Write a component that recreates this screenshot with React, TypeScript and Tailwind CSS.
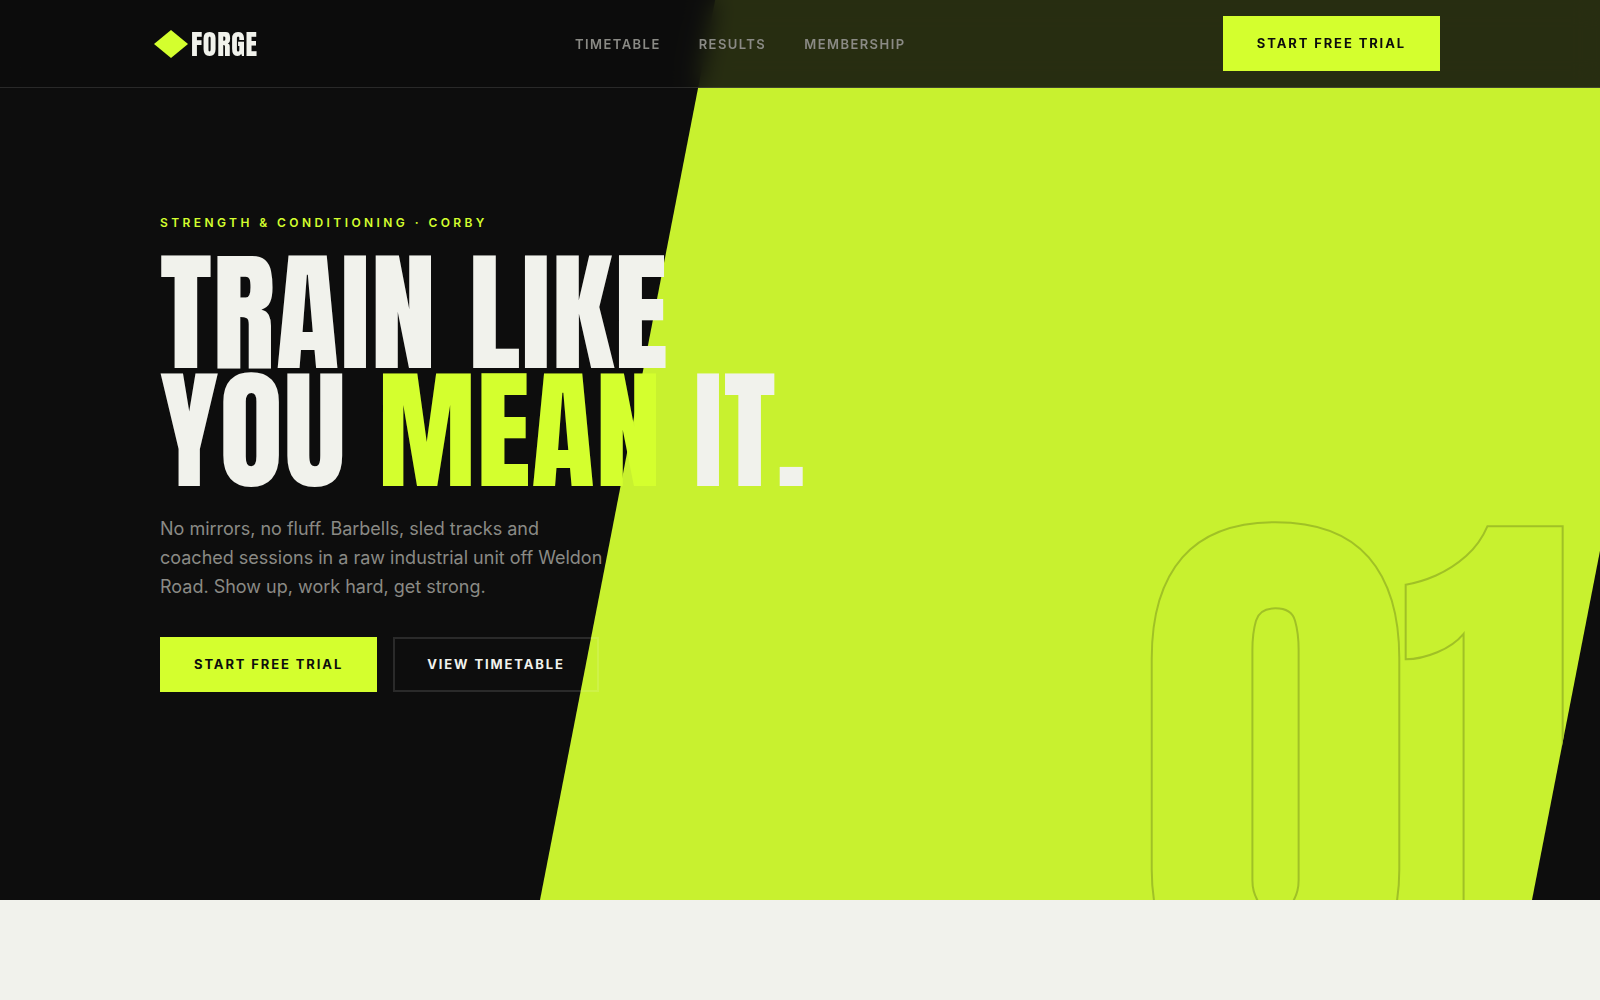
const navLinks = [
  { label: "Timetable", href: "#timetable" },
  { label: "Results", href: "#results" },
  { label: "Membership", href: "#membership" },
]

function Logo() {
  return (
    <a href="#top" className="flex items-center gap-[9px]">
      <svg viewBox="0 0 22 28" className="h-7 w-[22px] overflow-visible" aria-hidden="true">
        <path d="M11 0 28 14 11 28-6 14Z" fill="#d4ff2e" />
      </svg>
      <span className="font-['Anton',sans-serif] text-[28px] leading-8 tracking-wide uppercase">Forge</span>
    </a>
  )
}

function TrialButton() {
  return (
    <button
      type="button"
      className="border-2 border-[#d4ff2e] bg-[#d4ff2e] px-8 py-4 text-[13px] leading-[19px] font-bold tracking-[0.145em] text-[#0d0d0d] uppercase"
    >
      Start free trial
    </button>
  )
}

function Header() {
  return (
    <header className="fixed inset-x-0 top-0 z-10 border-b border-white/12 bg-[#0d0d0d]/86 backdrop-blur-md">
      <div className="mx-auto flex max-w-7xl items-center justify-between py-4">
        <Logo />
        <nav className="flex gap-[38px]">
          {navLinks.map((link) => (
            <a
              key={link.href}
              href={link.href}
              className="text-[13px] leading-5 font-semibold tracking-[0.11em] text-[#8a8a85] uppercase"
            >
              {link.label}
            </a>
          ))}
        </nav>
        <TrialButton />
      </div>
    </header>
  )
}

function Hero() {
  return (
    <section className="relative flex min-h-[90vh] items-center overflow-hidden bg-[#0d0d0d] pt-1">
      {/* Slanted lime panel, the outlined number is clipped by the same edge */}
      <div
        aria-hidden="true"
        className="absolute inset-0 overflow-hidden bg-[#c8f12f] [clip-path:polygon(44.7%_0,106.7%_0,95.75%_100%,33.75%_100%)]"
      >
        <span className="absolute right-8 -bottom-34 font-['Anton',sans-serif] text-[544px] leading-none tracking-[-0.02em] text-transparent [-webkit-text-stroke:2px_#a0c126]">
          01
        </span>
      </div>

      <div className="relative mx-auto w-full max-w-7xl">
        <p className="text-xs leading-5 font-semibold tracking-[0.285em] text-[#d4ff2e] uppercase">
          Strength &amp; Conditioning · Corby
        </p>
        <h1 className="mt-[21px] font-['Anton',sans-serif] text-[131px] leading-[118px] tracking-[0.006em] text-[#f1f2ec] uppercase">
          Train like
          <br />
          you <span className="text-[#d4ff2e]">mean</span> it.
        </h1>
        <p className="mt-6 max-w-md text-lg leading-[29px] text-[#8a8a85]">
          No mirrors, no fluff. Barbells, sled tracks and coached sessions in a raw industrial unit off Weldon Road. Show
          up, work hard, get strong.
        </p>
        <div className="mt-9 flex gap-4">
          <TrialButton />
          <button
            type="button"
            className="border-2 border-white/12 px-8 py-4 text-[13px] leading-[19px] font-bold tracking-[0.145em] text-[#f1f2ec] uppercase"
          >
            View timetable
          </button>
        </div>
      </div>
    </section>
  )
}

export default function App() {
  return (
    <div id="top" className="min-h-screen bg-[#f1f2ec] font-['Inter',sans-serif] text-[#f1f2ec]">
      <Header />
      <Hero />
    </div>
  )
}
